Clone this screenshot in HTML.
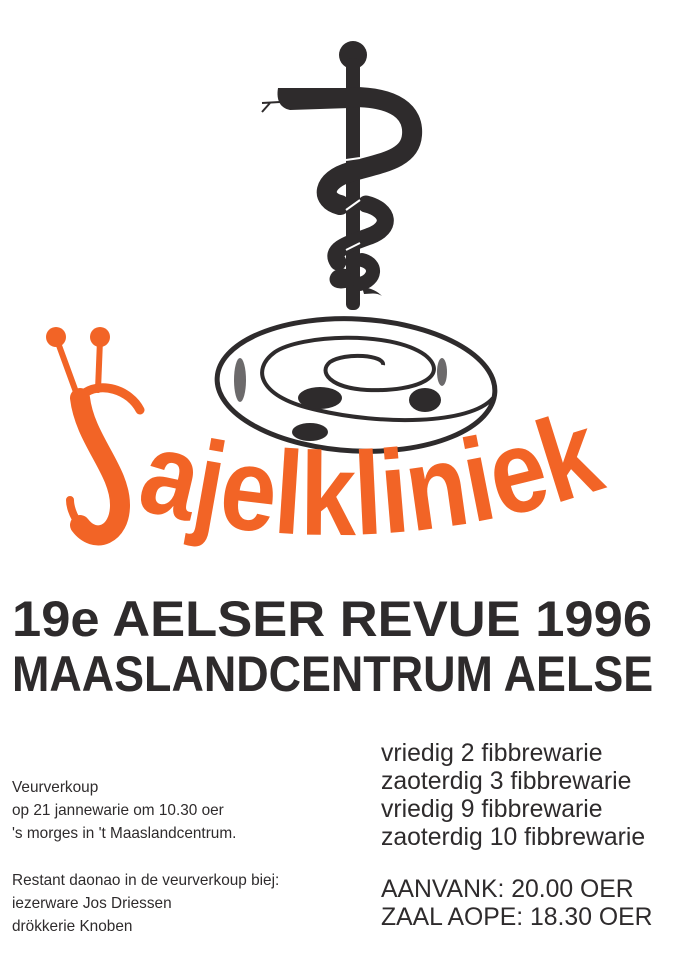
<!DOCTYPE html>
<html><head><meta charset="utf-8"><style>
html,body{margin:0;padding:0;background:#fff;}
body{width:678px;height:960px;position:relative;overflow:hidden;font-family:"Liberation Sans",sans-serif;color:#2e2b2c;}
.t{position:absolute;white-space:nowrap;}
.h{font-weight:bold;font-size:50px;left:12px;transform-origin:0 0;}
.s{font-size:16px;left:12px;transform:scaleX(0.96);transform-origin:0 0;}
.r{font-size:25px;left:381px;transform:scaleX(0.99);transform-origin:0 0;}
</style></head><body>
<svg width="678" height="960" style="position:absolute;left:0;top:0">
<circle cx="353" cy="55" r="14" fill="#2e2b2c"/>
<rect x="346" y="58" width="14" height="252" rx="6" fill="#2e2b2c"/>
<g fill="none" stroke="#2e2b2c" stroke-linecap="round">
<path d="M352 97 C395 97 414 112 412 135 C410 160 380 163 350 172 C322 180 320 200 340 205" stroke-width="20"/>
<path d="M366 204 C390 210 392 228 370 236 C345 245 330 250 338 262" stroke-width="17"/>
<path d="M362 260 C378 264 376 280 360 284" stroke-width="14"/>
<path d="M345 282 C330 285 335 272 345 275" stroke-width="12"/>
</g>
<path d="M278 88 L350 88 L350 108 L290 110 C280 108 276 100 278 88 Z" fill="#2e2b2c"/>
<path d="M280 102 L262 103 M270 103 L262 112" stroke="#2e2b2c" stroke-width="2"/>
<path d="M362 287 C372 288 378 292 382 296 C376 292 370 294 364 294 Z" fill="#2e2b2c"/>
<g stroke="#fff" stroke-width="2">
<line x1="346" y1="160" x2="360" y2="158"/>
<line x1="346" y1="210" x2="360" y2="200"/>
<line x1="346" y1="250" x2="360" y2="243"/>
</g>
<ellipse cx="356" cy="385" rx="139" ry="66" transform="rotate(3 356 385)" fill="none" stroke="#2e2b2c" stroke-width="5"/>
<path d="M493 398 C470 425 380 425 317 410 C260 398 250 370 275 352 C300 335 390 330 425 355 C450 375 420 392 367 390 C330 388 318 372 330 362 C345 352 385 355 383 365" fill="none" stroke="#2e2b2c" stroke-width="4"/>
<g fill="#2e2b2c">
<ellipse cx="320" cy="398" rx="22" ry="11"/>
<ellipse cx="425" cy="400" rx="16" ry="12"/>
<ellipse cx="310" cy="432" rx="18" ry="9"/>
<ellipse cx="240" cy="380" rx="6" ry="22" opacity="0.7"/>
<ellipse cx="442" cy="372" rx="5" ry="14" opacity="0.7"/>
</g>
<g fill="#f26426">
<circle cx="56" cy="337" r="10"/>
<circle cx="100" cy="337" r="10"/>
</g>
<g fill="none" stroke="#f26426" stroke-linecap="round">
<path d="M57 340 L76 392" stroke-width="6"/>
<path d="M100 340 L98 390" stroke-width="6"/>
<path d="M140 410 C130 390 100 380 82 395" stroke-width="9"/>
<path d="M80 398 C85 440 120 470 120 505 C120 535 95 545 80 525" stroke-width="20"/>
<path d="M80 525 C72 515 70 505 70 500" stroke-width="8"/>
</g>
<defs><path id="cv" d="M135 508 Q380 575 640 475"/></defs>
<text font-family="Liberation Sans,sans-serif" font-weight="bold" font-size="118" fill="#f26426"><textPath href="#cv" textLength="480" lengthAdjust="spacingAndGlyphs">ajelkliniek</textPath></text>
</svg>
<div class="t h" style="top:590px;transform:scaleX(1.05)">19e AELSER REVUE 1996</div>
<div class="t h" style="top:645px;transform:scaleX(0.897)">MAASLANDCENTRUM AELSE</div>
<div class="t s" style="top:779px">Veurverkoup</div>
<div class="t s" style="top:802px">op 21 jannewarie om 10.30 oer</div>
<div class="t s" style="top:825px">'s morges in 't Maaslandcentrum.</div>
<div class="t s" style="top:872px">Restant daonao in de veurverkoup biej:</div>
<div class="t s" style="top:895px">iezerware Jos Driessen</div>
<div class="t s" style="top:918px">drökkerie Knoben</div>
<div class="t r" style="top:739px">vriedig 2 fibbrewarie</div>
<div class="t r" style="top:767px">zaoterdig 3 fibbrewarie</div>
<div class="t r" style="top:795px">vriedig 9 fibbrewarie</div>
<div class="t r" style="top:823px">zaoterdig 10 fibbrewarie</div>
<div class="t r" style="top:875px">AANVANK: 20.00 OER</div>
<div class="t r" style="top:903px">ZAAL AOPE: 18.30 OER</div>
</body></html>
